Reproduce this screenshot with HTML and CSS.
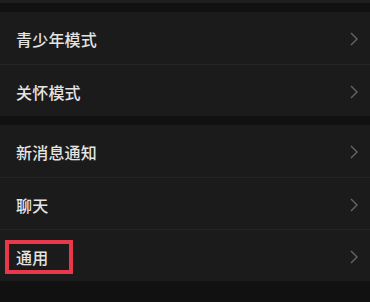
FILE: index.html
```html
<!DOCTYPE html>
<html>
<head>
<meta charset="utf-8">
<link rel="stylesheet" href="styles.css">
</head>
<body>
<div class="topbar"></div>

<!-- first group -->
<div class="group">
  <div class="row"><span class="label">青少年模式</span><svg class="arrow" viewBox="0 0 8 14"><polyline points="1,1 7,7 1,13"/></svg></div>
  <div class="row"><span class="label">关怀模式</span><svg class="arrow" viewBox="0 0 8 14"><polyline points="1,1 7,7 1,13"/></svg></div>
</div>

<!-- second group -->
<div class="group">
  <div class="row"><span class="label">新消息通知</span><svg class="arrow" viewBox="0 0 8 14"><polyline points="1,1 7,7 1,13"/></svg></div>
  <div class="row"><span class="label">聊天</span><svg class="arrow" viewBox="0 0 8 14"><polyline points="1,1 7,7 1,13"/></svg></div>
  <div class="row"><span class="label">通用</span><svg class="arrow" viewBox="0 0 8 14"><polyline points="1,1 7,7 1,13"/></svg><div class="redbox"></div></div>
</div>
</body>
</html>
```

FILE: styles.css
```css
body {
    margin: 0;
    background-color: #111111;
    font-family: "Noto Sans CJK SC", "Noto Sans", sans-serif;
    width: 370px;
    height: 302px;
    overflow: hidden;
}

.topbar {
    height: 3px;
    background-color: #1f1f1f;
    margin-bottom: 9px;
}

.group {
    background-color: #1b1b1b;
    margin-bottom: 9px;
}

.row {
    position: relative;
    height: 52px;
    display: flex;
    align-items: center;
    justify-content: space-between;
    padding: 2px 12px 0 16px;
    box-sizing: border-box;
    border-top: 1px solid #252525;
}

.row:first-child {
    border-top: none;
}

.label {
    color: #e4e4e4;
    font-size: 16px;
    font-weight: 500;
    letter-spacing: 0.2px;
}

.arrow {
    width: 8px;
    height: 14px;
    fill: none;
    stroke: #666666;
    stroke-width: 1.4;
}

/* red highlight around 通用 */
.redbox {
    position: absolute;
    left: 5px;
    top: 10px;
    width: 60px;
    height: 26px;
    border: 4px solid #e8384a;
}
```
